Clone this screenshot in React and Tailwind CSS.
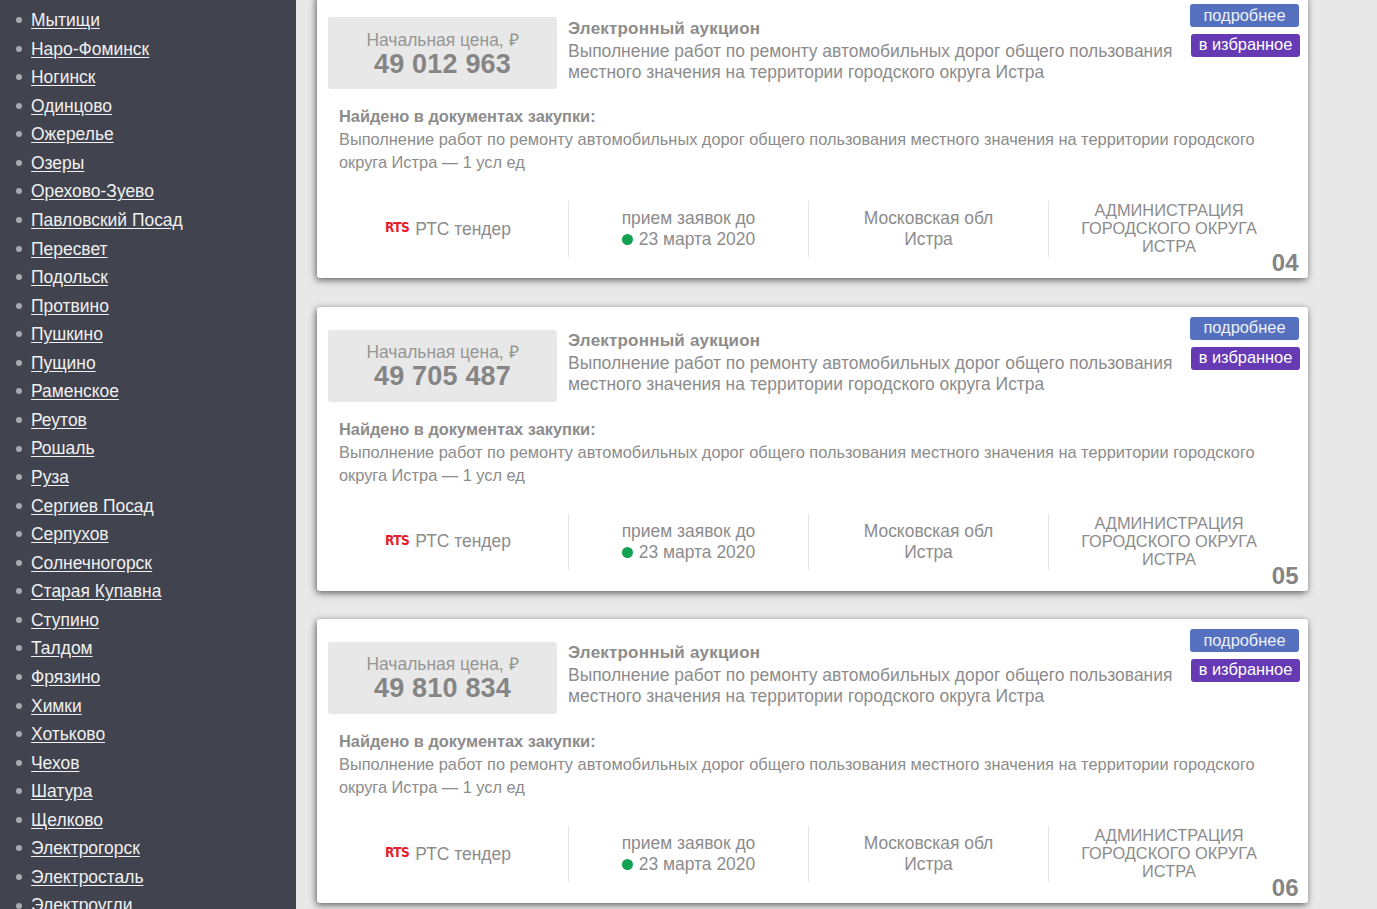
const cities = [
  "Мытищи", "Наро-Фоминск", "Ногинск", "Одинцово", "Ожерелье", "Озеры", "Орехово-Зуево",
  "Павловский Посад", "Пересвет", "Подольск", "Протвино", "Пушкино", "Пущино", "Раменское",
  "Реутов", "Рошаль", "Руза", "Сергиев Посад", "Серпухов", "Солнечногорск", "Старая Купавна",
  "Ступино", "Талдом", "Фрязино", "Химки", "Хотьково", "Чехов", "Шатура", "Щелково",
  "Электрогорск", "Электросталь", "Электроугли",
]

const lots = [
  { price: "49 012 963", num: "04" },
  { price: "49 705 487", num: "05" },
  { price: "49 810 834", num: "06" },
]

function Card({ price, num }) {
  return (
    <div className="relative h-[284px] shrink-0 rounded-[3px] bg-white pl-[11px] pt-[23px] shadow-[-1px_2px_7px_rgba(0,0,0,0.6)]">
      <a className="absolute left-[873px] top-[10px] flex h-[23px] w-[109px] items-center justify-center rounded-[3px] bg-[#5470bf] pb-[1px] text-[16.4px] text-[#eef0f8]">
        подробнее
      </a>
      <a className="absolute left-[874px] top-[40px] flex h-[23px] w-[109px] items-center justify-center rounded-[3px] bg-[#6639b5] pb-[2px] text-[16.4px] text-white">
        в избранное
      </a>

      <div className="flex">
        <div className="flex h-[72px] w-[229px] shrink-0 flex-col items-center rounded-[3px] bg-[#e8e8e8] pt-[12.5px]">
          <div className="text-[17.44px] leading-[20px] text-[#969696]">Начальная цена, ₽</div>
          <div className="text-[27px] font-bold leading-[28px] tracking-[0.2px] text-[#858585]">{price}</div>
        </div>
        <div className="ml-[11px] w-[620px] text-[17.44px] leading-[21px] text-[#8c8c8c]">
          <div className="mt-[0.5px] text-[17px] font-bold leading-[22px] tracking-[0.2px]">Электронный аукцион</div>
          <div className="mt-[1px]">
            Выполнение работ по ремонту автомобильных дорог общего пользования местного значения на территории городского округа Истра
          </div>
        </div>
      </div>

      <div className="mt-[16px] w-[930px] pl-[11px] text-[16.38px] leading-[23px] text-[#8c8c8c]">
        <div className="font-bold">Найдено в документах закупки:</div>
        <div>
          Выполнение работ по ремонту автомобильных дорог общего пользования местного значения на территории городского округа Истра — 1 усл ед
        </div>
      </div>

      <div className="mt-[27px] flex h-[56px] text-[17.44px] text-[#8c8c8c]">
        <div className="flex w-[241px] items-center justify-center gap-[6px] border-r border-[#e4e4e4]">
          <span className="mb-[3px] font-['DejaVu_Sans_Condensed','DejaVu_Sans',sans-serif] text-[13.5px] font-bold tracking-[-0.5px] text-[#e3202c]">RTS</span>
          <span>РТС тендер</span>
        </div>
        <div className="flex w-[240px] flex-col items-center justify-center border-r border-[#e4e4e4] leading-[21px]">
          <div>прием заявок до</div>
          <div className="flex items-center gap-[6px]">
            <span className="h-[11px] w-[11px] rounded-full bg-[#12a150]"></span>
            <span>23 марта 2020</span>
          </div>
        </div>
        <div className="flex w-[240px] flex-col items-center justify-center border-r border-[#e4e4e4] leading-[21px]">
          <div>Московская обл</div>
          <div>Истра</div>
        </div>
        <div className="flex w-[240px] flex-col items-center justify-center pb-[1.5px] text-center text-[16.38px] leading-[18px]">
          <div>АДМИНИСТРАЦИЯ</div>
          <div>ГОРОДСКОГО ОКРУГА</div>
          <div>ИСТРА</div>
        </div>
      </div>

      <div className="absolute bottom-[1px] right-[9px] text-[24px] font-bold leading-[28px] tracking-[0.3px] text-[#858585]">{num}</div>
    </div>
  )
}

export default function App() {
  return (
    <div className="flex h-[909px] overflow-hidden bg-[#e8e8e8] font-['Liberation_Sans',Arial,sans-serif]">
      <aside className="w-[296px] shrink-0 overflow-hidden bg-[#41434f] pl-[16px] pt-[5.8px]">
        <ul>
          {cities.map((city) => (
            <li key={city} className="flex h-[28.57px] items-center text-[17.44px] text-[#f0f0f0]">
              <span className="mr-[9px] h-[6px] w-[6px] rounded-full bg-[#a8a9b0]"></span>
              <a className="underline underline-offset-[2px]">{city}</a>
            </li>
          ))}
        </ul>
      </aside>
      <main className="-mt-[5.9px] ml-[21px] flex w-[991px] shrink-0 flex-col gap-[28.4px]">
        {lots.map((lot) => (
          <Card key={lot.num} price={lot.price} num={lot.num} />
        ))}
      </main>
    </div>
  )
}
